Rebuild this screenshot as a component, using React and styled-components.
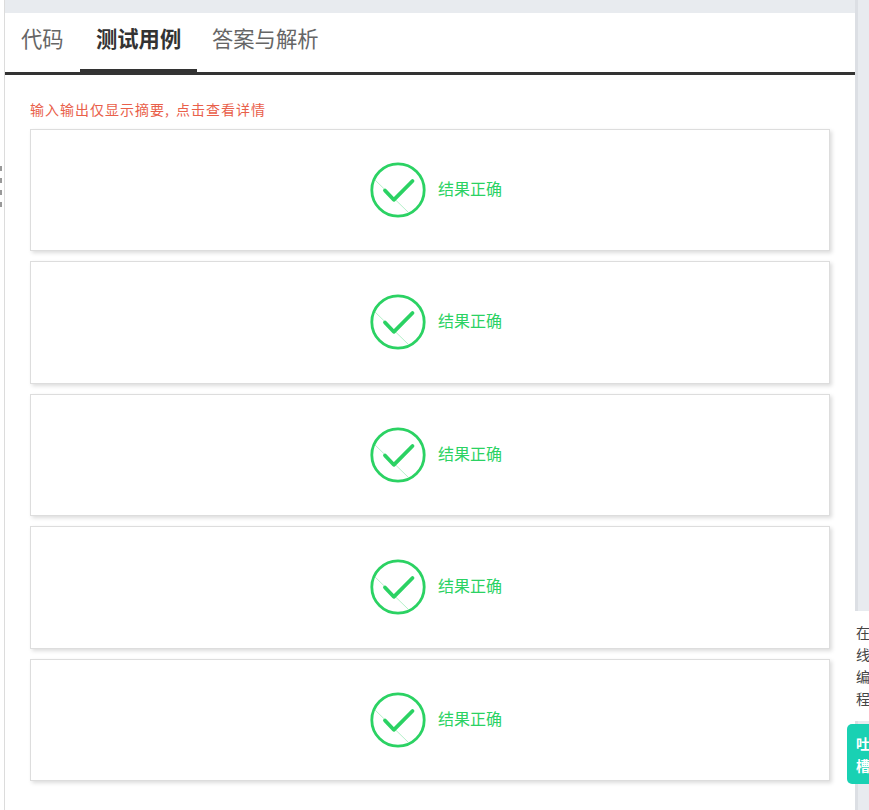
import React from 'react';
import styled, { createGlobalStyle } from 'styled-components';

const GlobalStyle = createGlobalStyle`
  html, body {
    margin: 0;
    padding: 0;
    height: 100%;
    overflow: hidden;
    background: #e8ebef;
    font-family: "Noto Sans CJK SC", "Noto Sans", sans-serif;
  }
`;

const tabs = ['代码', '测试用例', '答案与解析'];
const cases = [0, 1, 2, 3, 4];

const Page = styled.div`
  display: grid;
  grid-template-columns: 5px 850px 1fr;
  height: 810px;
  width: 869px;
  overflow: hidden;
`;

const LeftRail = styled.div`
  background: #fff;
  border-right: 1px solid #dcdcdc;
  box-sizing: border-box;
`;

const RightRail = styled.div`
  background: linear-gradient(90deg, #dcdfe4 0, #dcdfe4 3px, #e8ebef 3px);
`;

const Panel = styled.main`
  margin-top: 13px;
  background: #fff;
  min-width: 0;
`;

const TabBar = styled.nav`
  display: flex;
  height: 62px;
  box-sizing: border-box;
  border-bottom: 3px solid #333;
`;

const Tab = styled.div`
  padding: 9px 16px 0;
  margin-right: ${p => (p.$active ? '-1.2px' : '0.4px')};
  height: ${p => (p.$active ? '62px' : '59px')};
  box-sizing: border-box;
  border-bottom: ${p => (p.$active ? '6px solid #333' : 'none')};
  font-size: 21.3px;
  line-height: 32px;
  font-weight: ${p => (p.$active ? 700 : 400)};
  color: ${p => (p.$active ? '#333' : '#666')};
`;

const Content = styled.section`
  padding: 25px 25px 0;
`;

const Note = styled.p`
  margin: 0 0 10.9px;
  font-size: 14px;
  letter-spacing: 1px;
  word-spacing: 2px;
  line-height: 18px;
  color: #e9604a;
`;

const CaseCard = styled.div`
  display: flex;
  align-items: center;
  justify-content: center;
  gap: 12px;
  height: 122.5px;
  margin-bottom: 10px;
  padding: 0 0 0.5px 12px;
  box-sizing: border-box;
  background: #fff;
  border: 1px solid #ddd;
  box-shadow: 2px 2px 4px rgba(0, 0, 0, 0.14);
`;

const CaseLabel = styled.span`
  margin-bottom: 4px;
  font-size: 16px;
  line-height: 24px;
  color: #2bd263;
`;

const SideTab = styled.aside`
  position: absolute;
  left: 855px;
  top: 611px;
  width: 14px;
  height: 110px;
  padding: 10px 0 0 1px;
  box-sizing: border-box;
  background: #fff;
  overflow: hidden;
  font-size: 14px;
  line-height: 22px;
  color: #444;
`;

const FeedbackTab = styled.div`
  position: absolute;
  left: 847px;
  top: 724px;
  width: 22px;
  height: 60px;
  padding: 8px 0 0 9px;
  box-sizing: border-box;
  background: #19d1b3;
  border-radius: 5px 0 0 5px;
  overflow: hidden;
  font-size: 14px;
  font-weight: 700;
  line-height: 22px;
  color: #fff;
`;

const Glyph = styled.span`
  display: block;
  width: 14px;
`;

const DragHandle = styled.div`
  position: absolute;
  left: 0;
  top: 166px;
  display: flex;
  flex-direction: column;
  gap: 7px;
`;

const DragDot = styled.span`
  width: 2px;
  height: 5px;
  background: #999;
`;

function CheckIcon() {
  return (
    <svg width="56" height="56" viewBox="0 0 56 56" fill="none">
      <path d="M5 18 L38 50" stroke="#b5f0c9" strokeWidth="1" />
      <circle cx="28" cy="28" r="26.2" stroke="#2bd263" strokeWidth="2.8" />
      <path d="M15 28.5 L23.8 37.8 L42.5 19" stroke="#2bd263" strokeWidth="3.8" strokeLinecap="round" strokeLinejoin="round" />
    </svg>
  );
}

export default function App() {
  return (
    <>
      <GlobalStyle />
      <Page>
        <LeftRail />
        <Panel>
          <TabBar>
            {tabs.map(t => (
              <Tab key={t} $active={t === '测试用例'}>{t}</Tab>
            ))}
          </TabBar>
          <Content>
            <Note>输入输出仅显示摘要, 点击查看详情</Note>
            {cases.map(i => (
              <CaseCard key={i}>
                <CheckIcon />
                <CaseLabel>结果正确</CaseLabel>
              </CaseCard>
            ))}
          </Content>
        </Panel>
        <RightRail />
      </Page>
      <DragHandle>
        <DragDot /><DragDot /><DragDot /><DragDot />
      </DragHandle>
      <SideTab>
        {'在线编程'.split('').map(c => <Glyph key={c}>{c}</Glyph>)}
      </SideTab>
      <FeedbackTab>
        {'吐槽'.split('').map(c => <Glyph key={c}>{c}</Glyph>)}
      </FeedbackTab>
    </>
  );
}
